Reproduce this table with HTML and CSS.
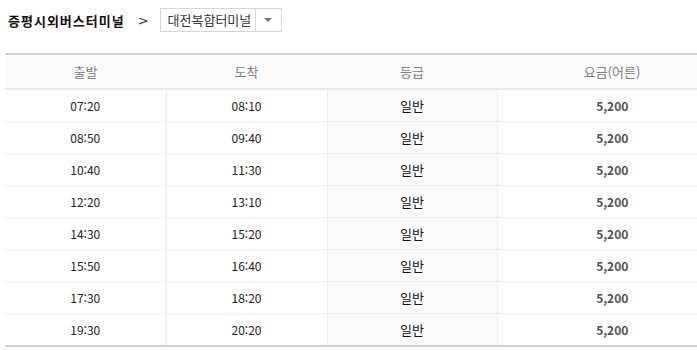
FILE: index.html
```html
<!DOCTYPE html>
<html lang="ko">
<head>
<meta charset="utf-8">
<link rel="stylesheet" href="styles.css">
</head>
<body>
<div class="page">
  <div class="route">
    <span class="origin">증평시외버스터미널</span>
    <span class="chev">&gt;</span>
    <div class="select">
      <span class="select-text">대전복합터미널</span>
      <span class="select-btn"><span class="tri"></span></span>
    </div>
  </div>
  <table class="timetable">
    <thead>
      <tr><th class="c1">출발</th><th class="c2">도착</th><th class="c3">등급</th><th class="c4">요금(어른)</th></tr>
    </thead>
    <tbody>
      <tr><td>07:20</td><td>08:10</td><td class="grade">일반</td><td class="fare">5,200</td></tr>
      <tr><td>08:50</td><td>09:40</td><td class="grade">일반</td><td class="fare">5,200</td></tr>
      <tr><td>10:40</td><td>11:30</td><td class="grade">일반</td><td class="fare">5,200</td></tr>
      <tr><td>12:20</td><td>13:10</td><td class="grade">일반</td><td class="fare">5,200</td></tr>
      <tr><td>14:30</td><td>15:20</td><td class="grade">일반</td><td class="fare">5,200</td></tr>
      <tr><td>15:50</td><td>16:40</td><td class="grade">일반</td><td class="fare">5,200</td></tr>
      <tr><td>17:30</td><td>18:20</td><td class="grade">일반</td><td class="fare">5,200</td></tr>
      <tr><td>19:30</td><td>20:20</td><td class="grade">일반</td><td class="fare">5,200</td></tr>
    </tbody>
  </table>
</div>
</body>
</html>
```

FILE: styles.css
```css
html, body {
  margin: 0;
  padding: 0;
  background: #fff;
  overflow: hidden;
}
.page {
  width: 697px;
  height: 350px;
  overflow: hidden;
  font-family: "Noto Sans CJK KR", "Noto Sans", sans-serif;
}
.route {
  display: flex;
  align-items: center;
  height: 24px;
  margin: 8px 0 0 8px;
}
.origin {
  font-size: 13px;
  font-weight: 700;
  color: #111;
  letter-spacing: 1px;
}
.chev {
  margin-left: 13px;
  font-family: "DejaVu Sans", sans-serif;
  font-size: 13px;
  color: #333;
}
.select {
  margin-left: 11px;
  display: flex;
  height: 22px;
  border: 1px solid #d6d6d6;
  align-items: stretch;
}
.select-text {
  width: 87px;
  padding-left: 7px;
  font-size: 13px;
  color: #333;
  line-height: 22px;
}
.select-btn {
  width: 25px;
  border-left: 1px solid #d6d6d6;
  display: flex;
  align-items: center;
  justify-content: center;
}
.tri {
  width: 0;
  height: 0;
  border-left: 4px solid transparent;
  border-right: 4px solid transparent;
  border-top: 4px solid #777;
}
.timetable {
  margin: 21px 0 0 5px;
  width: 722px;
  border-collapse: collapse;
  table-layout: fixed;
  border-top: 2px solid #cfcfcf;
  border-bottom: 2px solid #d0d0d0;
}
.c1, .c2 { width: 161px; }
.c3 { width: 170px; }
.c4 { width: 230px; }
.timetable th {
  height: 33px;
  padding: 0;
  background: #fafafa;
  color: #808080;
  font-weight: 400;
  font-size: 13px;
  border-bottom: 2px solid #e8e8e8;
}
.timetable td {
  height: 31px;
  padding: 0;
  text-align: center;
  font-size: 12px;
  color: #222;
  border-bottom: 1px solid #efefef;
  border-left: 1px solid #eeeeee;
}
.timetable td:first-child { border-left: none; }
.timetable tbody tr:last-child td { border-bottom: none; }
.timetable td.grade {
  background: #fafafa;
  font-size: 13px;
  color: #111;
}
.timetable td.fare {
  font-weight: 700;
  color: #4f4f5f;
}
```
